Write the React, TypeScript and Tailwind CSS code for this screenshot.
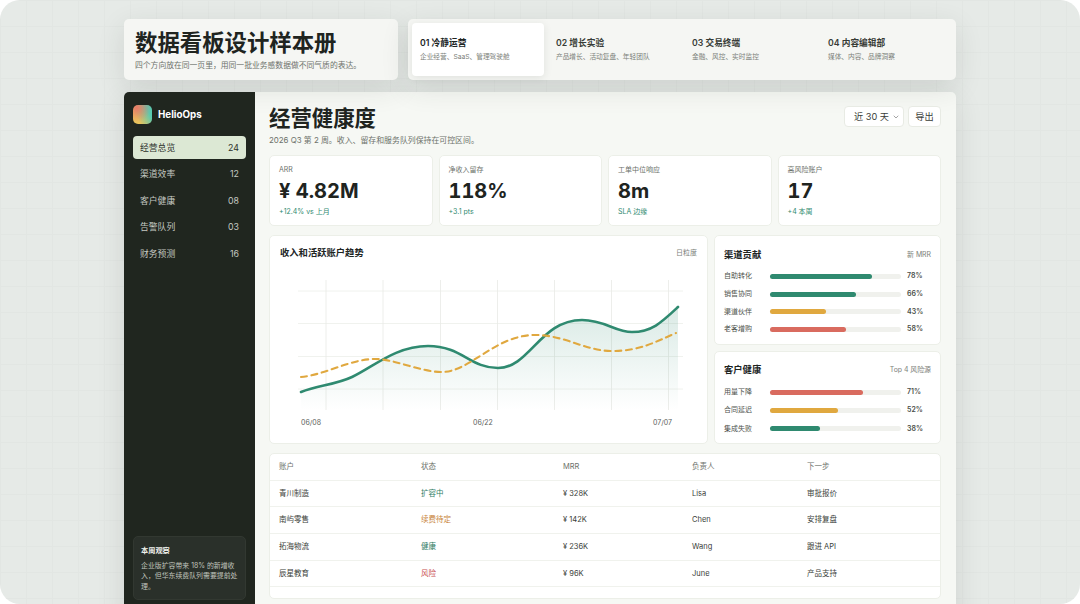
import { ChevronDown } from "lucide-react";

const tabs = [
  { title: "01 冷静运营", sub: "企业经营、SaaS、管理驾驶舱", active: true },
  { title: "02 增长实验", sub: "产品增长、活动复盘、年轻团队", active: false },
  { title: "03 交易终端", sub: "金融、风控、实时监控", active: false },
  { title: "04 内容编辑部", sub: "媒体、内容、品牌洞察", active: false },
];

const nav = [
  { name: "经营总览", count: "24", active: true },
  { name: "渠道效率", count: "12", active: false },
  { name: "客户健康", count: "08", active: false },
  { name: "告警队列", count: "03", active: false },
  { name: "财务预测", count: "16", active: false },
];

const kpis = [
  { label: "ARR", value: "¥ 4.82M", delta: "+12.4% vs 上月" },
  { label: "净收入留存", value: "118%", delta: "+3.1 pts" },
  { label: "工单中位响应", value: "8m", delta: "SLA 边缘" },
  { label: "高风险账户", value: "17", delta: "+4 本周" },
];

const channels = [
  { name: "自助转化", pct: 78, color: "bg-[#2f8a70]" },
  { name: "销售协同", pct: 66, color: "bg-[#2f8a70]" },
  { name: "渠道伙伴", pct: 43, color: "bg-[#e0a83f]" },
  { name: "老客增购", pct: 58, color: "bg-[#d96b5f]" },
];

const health = [
  { name: "用量下降", pct: 71, color: "bg-[#d96b5f]" },
  { name: "合同延迟", pct: 52, color: "bg-[#e0a83f]" },
  { name: "集成失败", pct: 38, color: "bg-[#2f8a70]" },
];

const accounts = [
  { name: "青川制造", status: "扩容中", tone: "text-[#2f7d64]", mrr: "¥ 328K", owner: "Lisa", next: "审批报价" },
  { name: "南屿零售", status: "续费待定", tone: "text-[#c8843a]", mrr: "¥ 142K", owner: "Chen", next: "安排复盘" },
  { name: "拓海物流", status: "健康", tone: "text-[#2f7d64]", mrr: "¥ 236K", owner: "Wang", next: "跟进 API" },
  { name: "辰星教育", status: "风险", tone: "text-[#c9504f]", mrr: "¥ 96K", owner: "June", next: "产品支持" },
];

const revenueLine =
  "M301 392 C318 385 335 385 352 377 C372 368 395 346 428 346 C462 346 470 368 498 368 C530 368 540 320 582 320 C605 320 615 332 632 332 C652 332 662 322 678 307";
const activeLine =
  "M301 377 C325 375 350 359 375 359 C395 359 420 372 442 372 C470 372 495 335 535 335 C565 335 585 351 612 351 C640 351 655 342 676 333";

function TrendChart() {
  return (
    <svg viewBox="270 270 437 165" className="mt-[10px] block h-[165px] w-[437px]">
      <defs>
        <linearGradient id="area" x1="0" y1="0" x2="0" y2="1">
          <stop offset="0" stopColor="#2f8a70" stopOpacity="0.18" />
          <stop offset="1" stopColor="#2f8a70" stopOpacity="0" />
        </linearGradient>
      </defs>
      {[291, 323.5, 356.5, 389].map((y) => (
        <line key={y} x1="298" x2="683" y1={y} y2={y} stroke="#f0f2ee" strokeWidth="1" />
      ))}
      {[326, 383, 440.5, 497.5, 554.5, 611.5, 668.5].map((x) => (
        <line key={x} x1={x} x2={x} y1="280" y2="410" stroke="#e8eae6" strokeWidth="0.8" />
      ))}
      <path d={`${revenueLine} L678 410 L301 410 Z`} fill="url(#area)" />
      <path d={revenueLine} fill="none" stroke="#2f8a70" strokeWidth="2.6" strokeLinecap="round" />
      <path d={activeLine} fill="none" stroke="#e0a83f" strokeWidth="2.1" strokeDasharray="6 4.6" strokeLinecap="round" />
      <text x="301" y="425" fontSize="7" fill="#5d625c">06/08</text>
      <text x="473" y="425" fontSize="7" fill="#5d625c">06/22</text>
      <text x="653" y="425" fontSize="7" fill="#5d625c">07/07</text>
    </svg>
  );
}

function BarPanel({
  title,
  note,
  rows,
  className,
  rowClass,
}: {
  title: string;
  note: string;
  rows: { name: string; pct: number; color: string }[];
  className: string;
  rowClass: string;
}) {
  return (
    <div className={`rounded-[5px] border border-[#ecefe8] bg-white px-[9px] ${className}`}>
      <div className="flex items-center justify-between">
        <h3 className="text-[9.3px] font-semibold text-[#20241f]">{title}</h3>
        <span className="text-[6.9px] text-[#7c817a]">{note}</span>
      </div>
      <div className="mt-[6px]">
        {rows.map((row) => (
          <div key={row.name} className={`grid grid-cols-[40px_131px_1fr] items-center gap-[6px] ${rowClass}`}>
            <span className="text-[7px] text-[#4e534d]">{row.name}</span>
            <div className="h-[5px] rounded-full bg-[#f0f1ed]">
              <div className={`h-full rounded-full ${row.color}`} style={{ width: `${row.pct}%` }} />
            </div>
            <span className="text-[7px] font-semibold text-[#4a4e49]">{row.pct}%</span>
          </div>
        ))}
      </div>
    </div>
  );
}

export default function App() {
  return (
    <div className="h-[604px] w-[1080px] overflow-hidden bg-white font-['Inter','Noto_Sans_CJK_SC',sans-serif] antialiased">
      <div className="h-full rounded-[20px] bg-[#e6eae7] bg-[linear-gradient(#e2e6e3_1px,transparent_1px),linear-gradient(90deg,#e2e6e3_1px,transparent_1px)] bg-[size:26px_26px] px-[124px] pt-[19px]">
        <div className="grid h-[61px] grid-cols-[274px_548px] gap-[10px]">
          <div className="rounded-[5px] bg-[#f5f6f3] px-[11px] pt-[9px] shadow-[0_8px_28px_rgba(40,50,40,0.12)]">
            <h1 className="text-[22.4px] leading-[29px] font-bold text-[#20241f]">数据看板设计样本册</h1>
            <p className="mt-[3px] text-[7.8px] leading-[11px] text-[#6d726b]">四个方向放在同一页里，用同一批业务感数据做不同气质的表达。</p>
          </div>
          <div className="grid grid-cols-4 gap-[4px] rounded-[5px] bg-[#f5f6f3] p-[4px] shadow-[0_8px_28px_rgba(40,50,40,0.12)]">
            {tabs.map((tab) => (
              <div
                key={tab.title}
                className={`rounded-[4px] px-[8px] pt-[14px] ${tab.active ? "bg-white shadow-[0_2px_8px_rgba(40,50,40,0.1)]" : ""}`}
              >
                <p className={`text-[8.7px] leading-[12px] font-semibold ${tab.active ? "text-[#20241f]" : "text-[#383c37]"}`}>{tab.title}</p>
                <p className="mt-[3px] text-[6.7px] leading-[10px] text-[#7c817a]">{tab.sub}</p>
              </div>
            ))}
          </div>
        </div>

        <div className="mt-[12px] flex h-[530px] overflow-hidden rounded-[5px] bg-[#f6f8f4] shadow-[0_8px_28px_rgba(40,50,40,0.12)]">
          <aside className="flex h-[512px] w-[131px] shrink-0 flex-col bg-[#20261f] px-[9px] pt-[13px] pb-[4px]">
            <div className="flex items-center gap-[6px]">
              <div className="h-[19px] w-[19px] rounded-[5px] bg-[radial-gradient(circle_at_20%_15%,#ea7a66,transparent_65%),linear-gradient(60deg,#e8c35c_25%,#58c9b0_75%)]" />
              <span className="pt-[1px] text-[9.8px] font-bold text-white">HelioOps</span>
            </div>
            <nav className="mt-[12px] flex flex-col gap-[3.5px]">
              {nav.map((item) => (
                <div
                  key={item.name}
                  className={`flex h-[23px] items-center justify-between rounded-[4px] px-[7px] text-[8.8px] ${item.active ? "bg-[#dce8d4] text-[#2b302a]" : "text-[#c5c9c2]"}`}
                >
                  <span>{item.name}</span>
                  <span>{item.count}</span>
                </div>
              ))}
            </nav>
            <div className="mt-auto rounded-[5px] border border-[#323831] bg-[#2a302a] px-[7px] pt-[8px] pb-[7px]">
              <p className="text-[7.2px] leading-[11px] font-semibold text-[#f1f3ee]">本周观察</p>
              <p className="mt-[4.5px] text-[6.9px] leading-[10.5px] text-[#c0c4bd]">企业版扩容带来 18% 的新增收入，但华东续费队列需要提前处理。</p>
            </div>
          </aside>

          <main className="w-[701px] pt-[12px] pr-[15px] pl-[14px]">
            <div className="flex items-start justify-between">
              <div>
                <h2 className="text-[21.4px] leading-[28px] font-bold text-[#20241f]">经营健康度</h2>
                <p className="mt-[2px] text-[7.9px] leading-[12px] text-[#6d726b]">2026 Q3 第 2 周。收入、留存和服务队列保持在可控区间。</p>
              </div>
              <div className="mt-[2px] flex gap-[4px]">
                <div className="flex h-[21px] w-[60px] items-center justify-between rounded-[4px] border border-[#e8ebe4] bg-white pr-[3px] pl-[9px] text-[9.2px] text-[#3a3e39]">
                  <span>近 30 天</span>
                  <ChevronDown className="h-[8px] w-[8px] text-[#777]" />
                </div>
                <div className="flex h-[21px] w-[33px] items-center justify-center rounded-[4px] border border-[#e8ebe4] bg-white text-[9.2px] text-[#3a3e39]">导出</div>
              </div>
            </div>

            <div className="mt-[9px] grid grid-cols-4 gap-[6px]">
              {kpis.map((kpi) => (
                <div key={kpi.label} className="h-[71px] rounded-[5px] border border-[#ecefe8] bg-white px-[9px] pt-[9px]">
                  <p className="text-[7px] leading-[10px] text-[#6d726b]">{kpi.label}</p>
                  <p className="mt-[2px] text-[20px] leading-[28px] font-bold text-[#20241f] tabular-nums">{kpi.value}</p>
                  <p className="mt-[2px] text-[7px] leading-[10px] text-[#2f8a70]">{kpi.delta}</p>
                </div>
              ))}
            </div>

            <div className="mt-[9px] grid h-[209px] grid-cols-[439px_227px] gap-[6px]">
              <div className="rounded-[5px] border border-[#ecefe8] bg-white pt-[10px]">
                <div className="flex items-center justify-between px-[10px]">
                  <h3 className="text-[9.3px] leading-[14px] font-semibold text-[#20241f]">收入和活跃账户趋势</h3>
                  <span className="text-[7px] text-[#7c817a]">日粒度</span>
                </div>
                <TrendChart />
              </div>
              <div className="flex flex-col gap-[6px]">
                <BarPanel title="渠道贡献" note="新 MRR" rows={channels} className="h-[110px] pt-[12px]" rowClass="h-[17.6px]" />
                <BarPanel title="客户健康" note="Top 4 风险源" rows={health} className="h-[93px] pt-[11px]" rowClass="h-[18.4px]" />
              </div>
            </div>

            <div className="mt-[9px] h-[146px] overflow-hidden rounded-[5px] border border-[#ecefe8] bg-white">
              <table className="w-full table-fixed text-left text-[7.5px] text-[#3a3e39]">
                <thead>
                  <tr className="h-[26px] border-b border-[#f0f2ed] text-[#6d726b]">
                    <th className="w-[142px] pl-[9px] font-normal">账户</th>
                    <th className="w-[142px] pl-[9px] font-normal">状态</th>
                    <th className="w-[129px] pl-[9px] font-normal">MRR</th>
                    <th className="w-[115px] pl-[9px] font-normal">负责人</th>
                    <th className="pl-[9px] font-normal">下一步</th>
                  </tr>
                </thead>
                <tbody>
                  {accounts.map((row) => (
                    <tr key={row.name} className="h-[26.7px] border-b border-[#f0f2ed]">
                      <td className="pl-[9px]">{row.name}</td>
                      <td className={`pl-[9px] ${row.tone}`}>{row.status}</td>
                      <td className="pl-[9px]">{row.mrr}</td>
                      <td className="pl-[9px]">{row.owner}</td>
                      <td className="pl-[9px]">{row.next}</td>
                    </tr>
                  ))}
                </tbody>
              </table>
            </div>
          </main>
        </div>
      </div>
    </div>
  );
}
